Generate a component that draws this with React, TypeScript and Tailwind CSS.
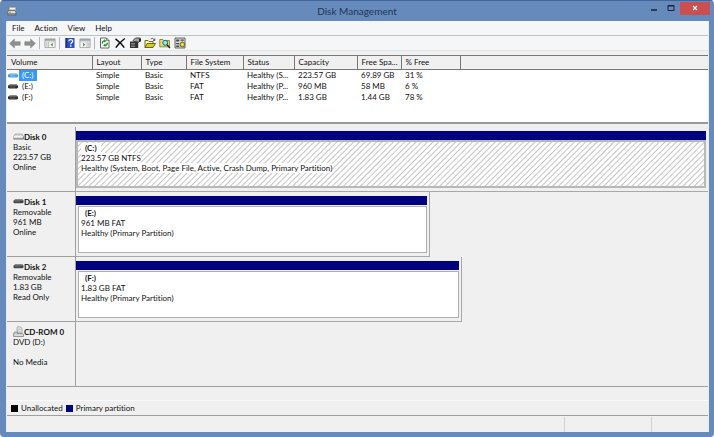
import React from 'react';

type Volume = {
  name: string;
  fs: string;
  status: string;
  capacity: string;
  free: string;
  percent: string;
  selected?: boolean;
};

const volumes: Volume[] = [
  { name: '(C:)', fs: 'NTFS', status: 'Healthy (S...', capacity: '223.57 GB', free: '69.89 GB', percent: '31 %', selected: true },
  { name: '(E:)', fs: 'FAT', status: 'Healthy (P...', capacity: '960 MB', free: '58 MB', percent: '6 %' },
  { name: '(F:)', fs: 'FAT', status: 'Healthy (P...', capacity: '1.83 GB', free: '1.44 GB', percent: '78 %' },
];

const columns = [
  { label: 'Volume', width: 'w-[85px]' },
  { label: 'Layout', width: 'w-[49px]' },
  { label: 'Type', width: 'w-[45px]' },
  { label: 'File System', width: 'w-[57px]' },
  { label: 'Status', width: 'w-[51px]' },
  { label: 'Capacity', width: 'w-[63px]' },
  { label: 'Free Spa...', width: 'w-[44px]' },
  { label: '% Free', width: 'w-[59px]' },
];

const disks = [
  {
    name: 'Disk 0',
    icon: 'hdd',
    info: ['Basic', '223.57 GB', 'Online'],
    width: 'w-full border-r-0',
    volume: { name: '(C:)', size: '223.57 GB NTFS', status: 'Healthy (System, Boot, Page File, Active, Crash Dump, Primary Partition)', selected: true },
  },
  {
    name: 'Disk 1',
    icon: 'usb',
    info: ['Removable', '961 MB', 'Online'],
    width: 'w-[56%] border-r',
    volume: { name: '(E:)', size: '961 MB FAT', status: 'Healthy (Primary Partition)' },
  },
  {
    name: 'Disk 2',
    icon: 'usb',
    info: ['Removable', '1.83 GB', 'Read Only'],
    width: 'w-[61%] border-r',
    volume: { name: '(F:)', size: '1.83 GB FAT', status: 'Healthy (Primary Partition)' },
  },
  { name: 'CD-ROM 0', icon: 'cd', info: ['DVD (D:)', '\u00a0', 'No Media'] },
];

const DriveIcon = ({ kind }: { kind: string }) => {
  if (kind === 'cd') {
    return (
      <svg className="h-3 w-[11px] shrink-0" viewBox="0 0 11 12">
        <path d="M4.5.8h3l1.500 2v4h-5v-4z" fill="#e2e2e2" stroke="#999" strokeWidth=".7" />
        <circle cx="6" cy="3.800" r="1" fill="#fff" stroke="#999" strokeWidth=".5" />
        <path d="M1.500 6h3v1.500h5l1 1v2H.5V8z" fill="#c9c9c9" stroke="#777" strokeWidth=".7" />
        <path d="M1 9.200h9" stroke="#f5f5f5" strokeWidth=".7" />
      </svg>
    );
  }
  if (kind === 'usb') {
    return (
      <svg className="h-3 w-[11px] shrink-0" viewBox="0 0 11 12">
        <path d="M2 3h7.500l1.200 2H.6z" fill="#8b8b8b" />
        <path d="M.5 4.500h10v2l-.8.700H1.200L.5 6.500z" fill="#444" />
        <path d="M2 5.800h5" stroke="#888" strokeWidth=".5" />
      </svg>
    );
  }
  return (
    <svg className="h-3 w-[11px] shrink-0" viewBox="0 0 11 12">
      <path d="M2.200 3h6.800l1.500 2.500V8H.6V5.500z" fill="#d8d8d8" stroke="#8d8d8d" strokeWidth=".6" />
      <path d="M.8 5.700h9.600" stroke="#fff" strokeWidth=".8" />
      <path d="M.6 7.900h10M10.300 5.500v2.400" stroke="#666" strokeWidth=".7" />
    </svg>
  );
};

const VolumeIcon = ({ selected }: { selected?: boolean }) => (
  <svg className="h-[11px] w-3 shrink-0" viewBox="0 0 12 11">
    <path d="M3 3h6.500L11 5H1z" fill={selected ? '#a9d0f3' : '#8b8b8b'} />
    <path d="M1 4.600h10v2l-1 .9H2l-1-.9z" fill={selected ? '#4f9be0' : '#333'} />
    <path d="M3 6h5" stroke={selected ? '#b9dcf8' : '#777'} strokeWidth=".6" />
  </svg>
);

const Icon = ({ children }: { children: React.ReactNode }) => (
  <svg className="size-3" viewBox="0 0 12 12">
    {children}
  </svg>
);

const Separator = () => <span className="mr-px h-3 w-px bg-[#b5b5b5]" />;

const ToolButton = ({ label, children }: { label: string; children: React.ReactNode }) => (
  <button type="button" aria-label={label} className="size-3">
    <Icon>{children}</Icon>
  </button>
);

const PaneIcon = ({ flip }: { flip?: boolean }) => (
  <>
    <path d="M.9 1.900h10.200v8.700H.9z" fill="#f4f4f4" stroke="#9a9a9a" strokeWidth=".8" />
    <path d="M1 2h10v1.800H1z" fill="#9aa3ad" />
    <path d="M1 4.800h10" stroke="#b5b5b5" strokeWidth=".6" />
    <path d={flip ? 'M8 5v5.500' : 'M4.400 5v5.500'} stroke="#a5a5a5" strokeWidth=".7" />
    <path d={flip ? 'M9 6.300h1.400M9 7.700h1.400M9 9.100h1.400' : 'M1.800 6.300h1.600M1.800 7.700h1.600M1.800 9.100h1.600'} stroke="#8f9aa6" strokeWidth=".6" />
    <path d={flip ? 'M4 5.800v3.800l2.400-1.900z' : 'M8.800 5.800v3.800L6.400 7.700z'} fill="#58a058" />
  </>
);

const Toolbar = () => (
  <div className="flex h-[15px] items-center gap-[3px] border-b border-[#e2e3e5] pl-[2px]">
    <ToolButton label="Back">
      <path d="M.6 6.500 5.400 2.100v2.600h5.800v3.600H5.400v2.600z" fill="#909090" stroke="#777" strokeWidth=".5" />
    </ToolButton>
    <ToolButton label="Forward">
      <path d="M11.400 6.500 6.600 2.100v2.600H.8v3.600h5.800v2.600z" fill="#909090" stroke="#777" strokeWidth=".5" />
    </ToolButton>
    <Separator />
    <ToolButton label="Show or hide console tree">
      <PaneIcon />
    </ToolButton>
    <Separator />
    <ToolButton label="Help">
      <path d="M1.500 1h9v10h-9z" fill="#2c4fc4" />
      <path d="M1.500 1h1.600v10H1.500z" fill="#1a3189" />
      <path d="M4.800 4.200C4.900 2 8.800 2 8.700 4.300 8.700 5.600 6.800 5.600 6.800 7.300" fill="none" stroke="#fff" strokeWidth="1.300" />
      <path d="M6.100 8.300h1.400v1.400H6.100z" fill="#fff" />
    </ToolButton>
    <ToolButton label="Show or hide action pane">
      <PaneIcon flip />
    </ToolButton>
    <Separator />
    <ToolButton label="Refresh">
      <path d="M1.500 1h6L10 3.500V11H1.500z" fill="#fff" stroke="#444" strokeWidth=".8" />
      <path d="M7.500 1v2.500H10" fill="none" stroke="#444" strokeWidth=".6" />
      <path d="M3.300 6.500c0-1.700.9-2.600 2.200-2.600M8.300 5.700c0 1.700-.9 2.600-2.200 2.600" fill="none" stroke="#149314" strokeWidth="1.300" />
      <path d="M5.200 2.200v3.400l2.200-1.700zM6.400 6.600V10L4.200 8.300z" fill="#149314" />
    </ToolButton>
    <ToolButton label="Delete">
      <path d="M1.500 1.800C4.500 4 8 7.300 10.300 10.600M10.800 1.500C7.500 4 4 7.300 1.800 10.600" fill="none" stroke="#111" strokeWidth="1.500" />
    </ToolButton>
    <ToolButton label="Properties">
      <path d="M1 4.500h8.200V11H1z" fill="#333" />
      <path d="M2 6.500h4M2 8h4M2 9.500h4" stroke="#bbb" strokeWidth=".6" />
      <path d="M4 3.500 6.500 1h4.800v3L9 5.500 7.500 4 6 5z" fill="#a8a8a8" stroke="#222" strokeWidth=".8" />
      <path d="M10 2h2v2.500h-2z" fill="#222" />
    </ToolButton>
    <ToolButton label="Open">
      <path d="M1 10.500V3.500h3l1 1h4v2" fill="#fff8a0" stroke="#4b4800" strokeWidth=".8" />
      <path d="M1 10.500 3.200 6.500h8.300L9 10.500z" fill="#d8cc24" stroke="#4b4800" strokeWidth=".8" />
      <path d="M6.800 2.200c1.200-1.200 2.800-.9 3.500.8M10.800 1.500v2H9" fill="none" stroke="#222" strokeWidth=".7" />
    </ToolButton>
    <ToolButton label="Explore">
      <path d="M.8 9.800V2.500h3l1 1h5.600v6.300z" fill="#eee46a" stroke="#77701d" strokeWidth=".8" />
      <circle cx="6.200" cy="5.800" r="2.500" fill="#8fe4ee" stroke="#1c6c84" strokeWidth="1" />
      <path d="m8 7.700 3 3.300" stroke="#222" strokeWidth="1.400" />
    </ToolButton>
    <ToolButton label="All tasks">
      <path d="M1 1h10v10H1z" fill="#ddd" stroke="#444" strokeWidth=".8" />
      <path d="M2.200 2.500h3v2h-3zM2.200 6h3v1.300h-3zM2.200 8.500h3V10h-3zM6.500 2.500h3.300v1.200H6.500z" fill="#444" />
      <circle cx="8.400" cy="7.500" r="2.400" fill="#d9c42a" stroke="#5d5310" strokeWidth=".8" />
      <circle cx="8.400" cy="7.500" r=".8" fill="#fff" />
    </ToolButton>
  </div>
);

const TitleBar = () => (
  <header className="grid h-[21px] grid-cols-[1fr_auto_1fr] items-center border-t border-[#43649a]">
    <svg className="ml-[7px] size-[10px]" viewBox="0 0 10 10">
      <path d="M2 1h7v4H2z" fill="#c9cdc8" stroke="#777" strokeWidth=".6" />
      <path d="M3 2.500h5" stroke="#f5f5f5" />
      <path d="M1.500 4.500h6.500l1 2v2.700H.7V6.500z" fill="#dedede" stroke="#555" strokeWidth=".7" />
      <path d="M1 8h8" stroke="#333" strokeWidth=".9" />
      <path d="M2 6.300h2" stroke="#4c9a4c" strokeWidth=".8" />
    </svg>
    <h1 className="text-[10px] text-[#1f3354]">Disk Management</h1>
    <div className="mr-1 flex items-center justify-end self-start text-[#14233f]">
      <button type="button" aria-label="Minimize" className="flex h-[14px] w-4 items-center justify-center">
        <svg className="size-2" viewBox="0 0 8 8">
          <path d="M1 6h6" stroke="currentColor" strokeWidth="1.500" />
        </svg>
      </button>
      <button type="button" aria-label="Maximize" className="flex h-[14px] w-[18px] items-center justify-center">
        <svg className="size-2" viewBox="0 0 8 8">
          <path d="M1 1.500h6v5H1zM1 2h6" fill="none" stroke="currentColor" />
        </svg>
      </button>
      <button type="button" aria-label="Close" className="flex h-[13px] w-[30px] items-center justify-center bg-[#c94f50] text-white">
        <svg className="size-2" viewBox="0 0 8 8">
          <path d="m2 2 4 4M6 2 2 6" stroke="currentColor" strokeWidth="1.300" />
        </svg>
      </button>
    </div>
  </header>
);

const VolumeTable = () => (
  <div className="h-[69px] border-t border-b-2 border-t-[#777] border-b-[#999] bg-white">
    <table className="w-full table-fixed border-collapse text-left">
      <colgroup>
        {columns.map((c) => (
          <col key={c.label} className={c.width} />
        ))}
        <col />
      </colgroup>
      <thead>
        <tr className="h-[13px] bg-[#f0f0f0]">
          {columns.map((c) => (
            <th key={c.label} className="border-r border-b border-[#777] p-0 pl-1 font-normal whitespace-nowrap">
              {c.label}
            </th>
          ))}
          <td className="border-b border-[#777] p-0" />
        </tr>
      </thead>
      <tbody>
        {volumes.map((v) => (
          <tr key={v.name} className="h-[11px] whitespace-nowrap">
            <td className="p-0">
              <div className="flex h-[11px] items-center">
                <VolumeIcon selected={v.selected} />
                <span className={v.selected ? 'bg-[#3399ff] pr-1 pl-[3px] text-white' : 'pr-1 pl-[3px]'}>{v.name}</span>
              </div>
            </td>
            <td className="p-0 pl-1">Simple</td>
            <td className="p-0 pl-1">Basic</td>
            <td className="p-0 pl-1">{v.fs}</td>
            <td className="p-0 pl-1">{v.status}</td>
            <td className="p-0 pl-1">{v.capacity}</td>
            <td className="p-0 pl-1">{v.free}</td>
            <td className="p-0 pl-1">{v.percent}</td>
            <td className="p-0" />
          </tr>
        ))}
      </tbody>
    </table>
  </div>
);

const DiskRow = ({ disk }: { disk: (typeof disks)[number] }) => (
  <section className="flex h-[65px]">
    <div className="w-[69px] shrink-0 border-r border-b border-[#a0a0a0] pt-[5px] pl-[6px] leading-[10px]">
      <h2 className="flex h-[10px] items-center font-bold whitespace-nowrap">
        <DriveIcon kind={disk.icon} />
        {disk.name}
      </h2>
      {disk.info.map((line) => (
        <p key={line}>{line}</p>
      ))}
    </div>
    {disk.volume ? (
      <div className="flex-1">
        <div className={`${disk.width} flex h-full flex-col border-b border-[#a8a8a8] pt-1 pr-[2px] pb-[3px]`}>
          <div className="h-[9px] bg-[#000080]" />
          <div
            className={
              disk.volume.selected
                ? 'flex-1 border-2 border-[#b8b8b8] bg-[repeating-linear-gradient(135deg,#fff_0px,#fff_2px,#c4c4c4_3px,#fff_4px)] pt-px pl-[3px] leading-[10px]'
                : 'mt-px ml-[2px] flex-1 border border-[#b0b0b0] bg-white pt-px pl-[2px] leading-[10px]'
            }
          >
            <p>
              <span className={disk.volume.selected ? 'bg-white px-1 font-bold' : 'px-1 font-bold'}>{disk.volume.name}</span>
            </p>
            <p>
              <span className={disk.volume.selected ? 'bg-white' : ''}>{disk.volume.size}</span>
            </p>
            <p>
              <span className={disk.volume.selected ? 'bg-white' : ''}>{disk.volume.status}</span>
            </p>
          </div>
        </div>
      </div>
    ) : (
      <div className="flex-1 border-b border-[#a0a0a0]" />
    )}
  </section>
);

const App = () => {
  return (
    <div className="bg-white">
      <main className="flex min-h-screen flex-col overflow-hidden rounded-[4px] bg-[#678abc] font-[Lato,sans-serif] text-[8px] leading-[11px] text-[#111] [font-variant-ligatures:none]">
        <TitleBar />
        <div className="mr-[5px] mb-[5px] ml-[6px] flex flex-1 flex-col border-x border-[#e8edf4] bg-[#f0f0f0]">
          <div className="bg-[#f5f6f7]">
            <nav className="flex h-[15px] items-center gap-[10px] border-b border-[#bfc2c6] pl-[5px]">
              <button type="button">File</button>
              <button type="button">Action</button>
              <button type="button">View</button>
              <button type="button">Help</button>
            </nav>
            <Toolbar />
          </div>
          <div className="h-1" />
          <VolumeTable />
          <div className="flex flex-1 flex-col pt-[3px]">
            {disks.map((d) => (
              <DiskRow key={d.name} disk={d} />
            ))}
          </div>
          <div className="flex h-4 items-center gap-[3px] border-t border-b border-t-[#fafafa] border-b-[#a0a0a0] pl-1">
            <span className="size-[7px] bg-black" />
            <span>Unallocated</span>
            <span className="size-[7px] bg-[#000080]" />
            <span>Primary partition</span>
          </div>
          <footer className="flex h-4 justify-end pt-px">
            <span className="w-[87px] border-l border-[#d0d0d0]" />
            <span className="w-[57px] border-l border-[#d0d0d0]" />
          </footer>
        </div>
      </main>
    </div>
  );
};

export default App;
